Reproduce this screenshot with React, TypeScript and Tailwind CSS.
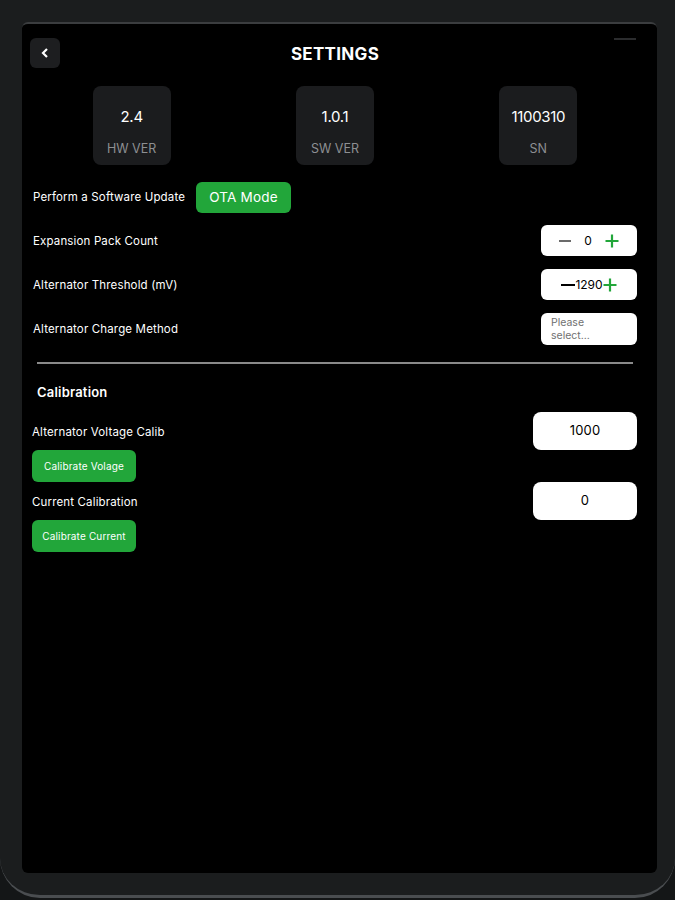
import React from "react";

const font = { fontFamily: "Inter, 'Open Sans', sans-serif" };

function Plus() {
  return (
    <svg width="14" height="14" viewBox="0 0 14 14">
      <path d="M7 0.5v13M0.5 7h13" stroke="#22a63a" strokeWidth="2.2" />
    </svg>
  );
}

function Card({ value, label }: { value: string; label: string }) {
  return (
    <div className="w-[78px] h-[79px] rounded-lg bg-[#1b1c1e] flex flex-col items-center">
      <div className="mt-[21px] text-[15px] leading-[20px] text-white tracking-[-0.3px]">{value}</div>
      <div className="mt-[14px] text-[12.5px] leading-[16px] text-[#8d8f92]">{label}</div>
    </div>
  );
}

export default function App() {
  return (
    <div className="w-[675px] h-[900px] overflow-hidden bg-[#141617]" style={font}>
      <div className="mt-[-40px] h-[938px] rounded-b-[40px] rounded-t-[40px] bg-[#1b1d1e] border-b-[3px] border-[#4a4d50] pt-[62px] pl-[22px] pr-[18px]">
        <div className="h-[851px] rounded-md bg-black border-t-2 border-[#3b3d3f] flex flex-col">
          {/* header */}
          <div className="ml-[8px] mr-[17px] mt-[14px] grid grid-cols-[30px_1fr_30px] items-center relative">
            <div className="w-[30px] h-[30px] rounded-md bg-[#1d1e20] flex items-center justify-center">
              <svg width="8" height="10" viewBox="0 0 8 10">
                <path d="M6 1L2 5l4 4" stroke="white" strokeWidth="2.2" fill="none" />
              </svg>
            </div>
            <div className="text-center text-white font-bold text-[17px] tracking-[0.3px] pt-[3px]">SETTINGS</div>
            <div />
            <div className="absolute right-[4px] top-0 w-[22px] h-[2px] bg-[#2b2c2e]" />
          </div>
          {/* cards */}
          <div className="ml-[8px] mr-[17px] mt-[18px] flex justify-around">
            <Card value="2.4" label="HW VER" />
            <Card value="1.0.1" label="SW VER" />
            <Card value="1100310" label="SN" />
          </div>
          {/* rows */}
          <div className="ml-[11px] mr-[20px] mt-[16px] flex flex-col gap-[13px] text-white text-[11.5px] tracking-[0.15px]">
            <div className="flex items-center h-[31px] pt-[2px]">
              <span>Perform a Software Update</span>
              <div className="ml-[11px] w-[95px] h-[31px] rounded-md bg-[#22a63a] flex items-center justify-center text-[13.5px] tracking-[0.2px]">
                OTA Mode
              </div>
            </div>
            <div className="flex items-center justify-between h-[31px]">
              <span className="pt-[2px]">Expansion Pack Count</span>
              <div className="w-[96px] h-[31px] rounded-md bg-white flex items-center justify-center text-black text-[12px]">
                <div className="w-[12px] h-[2px] bg-[#6b6b6b]" />
                <span className="mx-[13px]">0</span>
                <Plus />
              </div>
            </div>
            <div className="flex items-center justify-between h-[31px]">
              <span className="pt-[2px]">Alternator Threshold (mV)</span>
              <div className="w-[96px] h-[31px] rounded-md bg-white flex items-center justify-center text-black text-[12px] tracking-normal">
                <div className="w-[14px] h-[2px] bg-black" />
                <span>1290</span>
                <Plus />
              </div>
            </div>
            <div className="flex items-center justify-between h-[32px]">
              <span className="pt-[2px]">Alternator Charge Method</span>
              <div className="w-[96px] h-[32px] rounded-md bg-white px-[10px] pt-[3px] text-[#707070] text-[10.5px] leading-[13px] tracking-normal">
                Please
                <br />
                select...
              </div>
            </div>
          </div>
          <div className="ml-[15px] mr-[24px] mt-[17px] h-[2px] bg-[#8a8a8a]" />
          <div className="ml-[15px] mt-[20px] text-white font-semibold text-[13px] leading-[16px] tracking-[0.2px]">Calibration</div>
          <div className="ml-[10px] mr-[20px] mt-[12px] flex flex-col text-white text-[11.5px] tracking-[0.15px]">
            <div className="flex items-center justify-between h-[38px]">
              <span className="pt-[3px]">Alternator Voltage Calib</span>
              <div className="w-[104px] h-[38px] rounded-lg bg-white flex items-center justify-center text-black text-[13px]">1000</div>
            </div>
            <div className="w-[104px] h-[32px] rounded-md bg-[#22a63a] flex items-center justify-center text-[10px]">
              Calibrate Volage
            </div>
            <div className="flex items-center justify-between h-[38px]">
              <span className="pt-[3px]">Current Calibration</span>
              <div className="w-[104px] h-[38px] rounded-lg bg-white flex items-center justify-center text-black text-[13px]">0</div>
            </div>
            <div className="w-[104px] h-[32px] rounded-md bg-[#22a63a] flex items-center justify-center text-[10px]">
              Calibrate Current
            </div>
          </div>
        </div>
      </div>
    </div>
  );
}
